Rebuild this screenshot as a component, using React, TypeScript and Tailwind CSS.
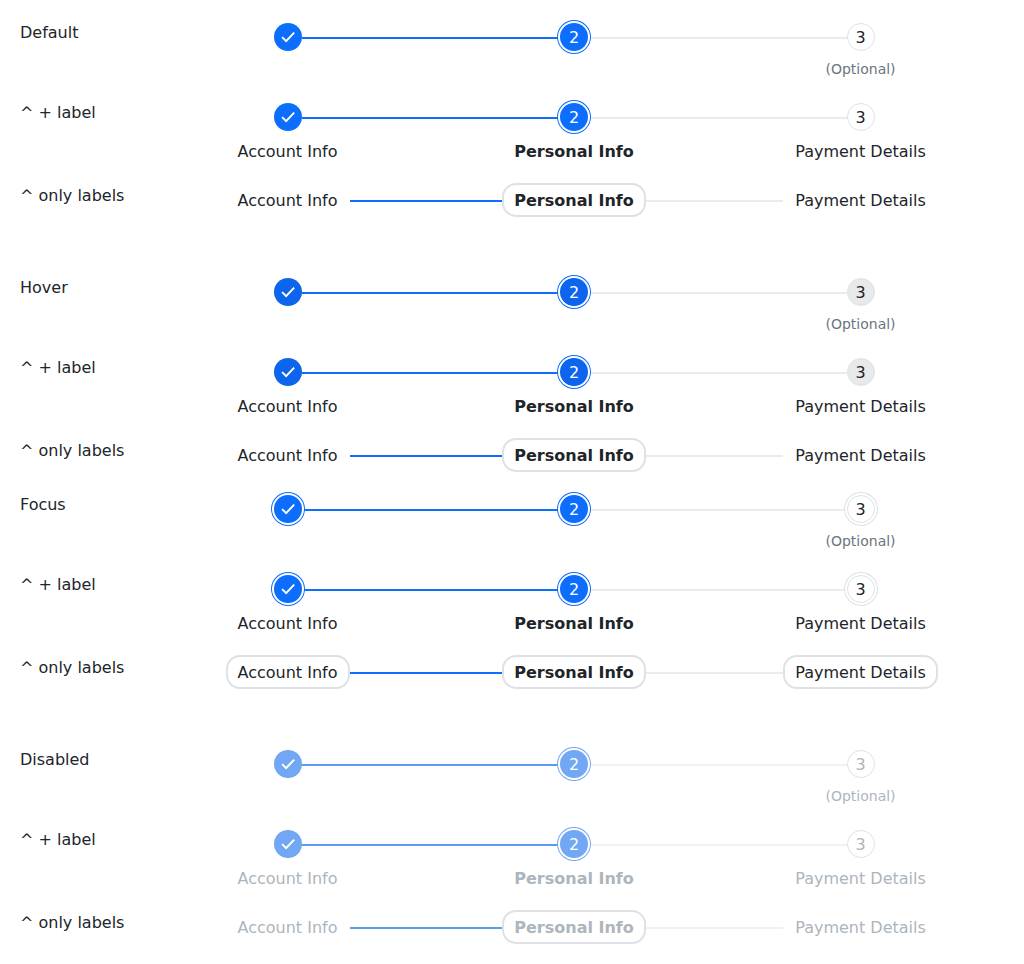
type Mode = 'default' | 'hover' | 'focus' | 'disabled';
type Variant = 'circle' | 'label' | 'text';

const NAMES = ['Account Info', 'Personal Info', 'Payment Details'];

function Check() {
  return (
    <svg viewBox="0 0 18 18" className="size-[18px]" fill="none" stroke="currentColor" strokeWidth="2">
      <path d="M3.1 9.1L7.1 13.1L15.2 4.6" />
    </svg>
  );
}

function circleClass(index: number, mode: Mode) {
  const ringed = index === 1 || mode === 'focus';
  if (index === 2) {
    const look =
      mode === 'hover'
        ? 'bg-[#e9e9ea] text-[#212529] border-[#dee2e6]'
        : mode === 'disabled'
          ? 'bg-white text-[#adb5bd] border-[#dee2e6]'
          : 'bg-white text-[#212529] border-[#dee2e6]';
    return `border ${look} ${ringed ? 'shadow-[0_0_0_2px_#fff,0_0_0_3px_#dee2e6]' : ''}`;
  }
  if (mode === 'disabled') {
    return `bg-[#72a7f4] text-white ${ringed ? 'shadow-[0_0_0_2px_#fff,0_0_0_3px_#72a7f4]' : ''}`;
  }
  const fill = mode === 'hover' ? 'bg-[#0c65ec]' : 'bg-[#0d6efd]';
  return `${fill} text-white ${ringed ? 'shadow-[0_0_0_2px_#fff,0_0_0_3px_#0d6efd]' : ''}`;
}

function Line({ kind, mode }: { kind: 'none' | 'done' | 'todo'; mode: Mode }) {
  const color =
    kind === 'none'
      ? ''
      : kind === 'done'
        ? mode === 'disabled' ? 'bg-[#5c9bf1]' : 'bg-[#0d6efd]'
        : mode === 'disabled' ? 'bg-[#f1f1f2]' : 'bg-[#e9ecef]';
  return <div className={`mt-[17px] h-0.5 flex-1 ${color}`} />;
}

function Step({ index, mode, variant }: { index: number; mode: Mode; variant: Variant }) {
  const weight = index === 1 ? 'font-bold' : '';
  const textColor = mode === 'disabled' ? 'text-[#adb5bd]' : 'text-[#212529]';
  const boxed = index === 1 || mode === 'focus';
  return (
    <div className="flex w-[286.5px] shrink-0 flex-col">
      <div className="flex h-[34px] items-start">
        <Line kind={index === 0 ? 'none' : index === 1 ? 'done' : 'todo'} mode={mode} />
        {variant === 'text' ? (
          <div
            className={`shrink-0 whitespace-nowrap rounded-[14px] border-2 px-2.5 pb-0.5 pt-1 leading-6 ${weight} ${textColor} ${boxed ? 'border-[#dee2e6]' : 'border-transparent'}`}
          >
            {NAMES[index]}
          </div>
        ) : (
          <div
            className={`z-10 mt-[3px] flex size-7 shrink-0 items-center justify-center rounded-full ${index === 0 ? 'pb-px' : 'pt-0.5'} ${circleClass(index, mode)}`}
          >
            {index === 0 ? <Check /> : index + 1}
          </div>
        )}
        <Line kind={index === 0 ? 'done' : index === 1 ? 'todo' : 'none'} mode={mode} />
      </div>
      {variant === 'label' && (
        <div className={`mt-1.5 text-center leading-6 ${weight} ${textColor}`}>{NAMES[index]}</div>
      )}
      {variant === 'circle' && index === 2 && (
        <div
          className={`mt-[5px] text-center text-sm leading-[21px] ${mode === 'disabled' ? 'text-[#adb5bd]' : 'text-[#6c757d]'}`}
        >
          (Optional)
        </div>
      )}
    </div>
  );
}

function Row({ title, mode, variant, height }: { title: string; mode: Mode; variant: Variant; height: string }) {
  return (
    <div className={`flex ${height}`}>
      <div className="w-[124.27px] shrink-0 whitespace-nowrap leading-[26px]">{title}</div>
      <div className="flex min-w-0 flex-1">
        {[0, 1, 2].map((i) => (
          <Step key={i} index={i} mode={mode} variant={variant} />
        ))}
      </div>
    </div>
  );
}

const GROUPS: { title: string; mode: Mode; last: string }[] = [
  { title: 'Default', mode: 'default', last: 'h-[92px]' },
  { title: 'Hover', mode: 'hover', last: 'h-[54px]' },
  { title: 'Focus', mode: 'focus', last: 'h-[92px]' },
  { title: 'Disabled', mode: 'disabled', last: 'h-[54px]' },
];

export default function App() {
  return (
    <div className="h-[964px] w-[1024px] overflow-hidden bg-white px-5 pt-5 font-['DejaVu_Sans',sans-serif] text-base text-[#212529]">
      {GROUPS.map((g) => (
        <section key={g.mode}>
          <Row title={g.title} mode={g.mode} variant="circle" height="h-20" />
          <Row title="^ + label" mode={g.mode} variant="label" height="h-[83px]" />
          <Row title="^ only labels" mode={g.mode} variant="text" height={g.last} />
        </section>
      ))}
    </div>
  );
}
